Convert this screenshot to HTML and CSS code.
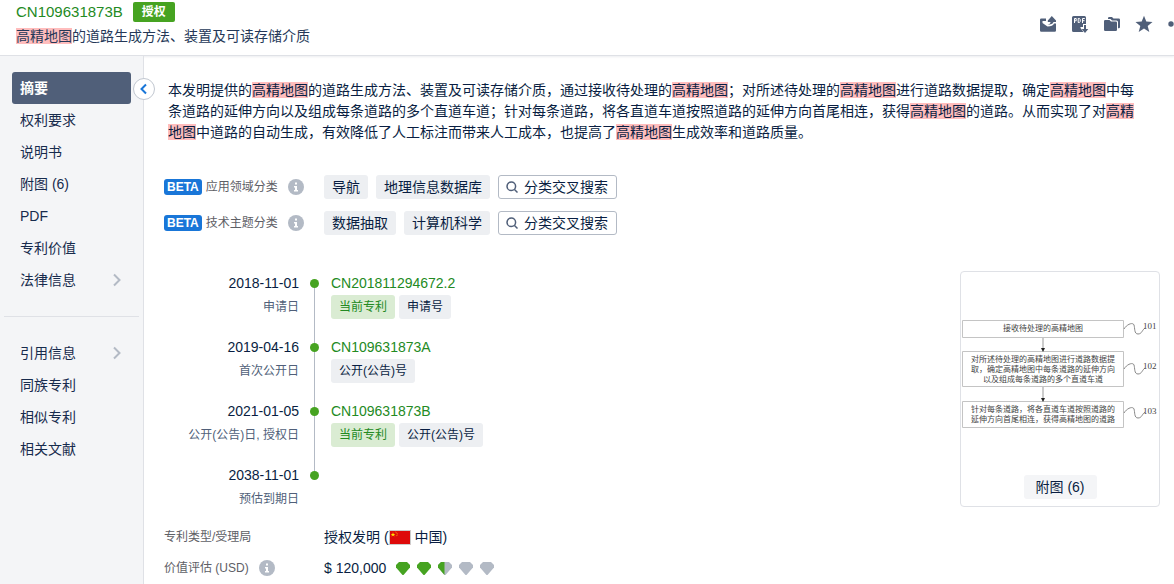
FILE: index.html
```html
<!DOCTYPE html>
<html lang="zh-CN">
<head>
<meta charset="utf-8">
<title>CN109631873B</title>
<meta name="viewport" content="width=device-width, initial-scale=1">
<link rel="stylesheet" href="styles.css">
</head>
<body>
<header class="header">
  <div class="heading">
    <div class="heading-top"><a class="patent-id" href="#">CN109631873B</a><span class="status">授权</span></div>
    <h1 class="title"><mark>高精地图</mark>的道路生成方法、装置及可读存储介质</h1>
  </div>
  <div class="actions">
    <button class="icon-btn" aria-label="分享"><svg width="18" height="18" viewBox="0 0 18 18"><path d="M2.200 3.500H7V6H3.500L3.500 8 8.500 11.500C12 11.500 14.500 10.500 15 8.500H17V15.500a1.300 1.300 0 0 1-1.300 1.300H2.200A1.300 1.300 0 0 1 1 15.500V4.800A1.300 1.300 0 0 1 2.200 3.500z"/><path d="M12.800 1L17 5.500V7H14.500C14 8.800 12 9.800 8.500 9.800 10.500 9.200 11.500 8.300 11.500 7H8.800V5.500z"/></svg></button>
    <button class="icon-btn" aria-label="下载PDF"><svg width="18" height="18" viewBox="0 0 18 18"><path d="M2.500 1h11A1.500 1.500 0 0 1 15 2.500V9h-3v3H9.500v1l3 4h-10A1.500 1.500 0 0 1 1 15.500v-13A1.500 1.500 0 0 1 2.500 1z"/><path d="M3.500 8V3.500h1.700v2.300H3.500M7.200 3.500v4h1.100l.9-.8V4.300l-.9-.8zM11.500 8V3.500h2.300M11.500 5.700h2" fill="none" stroke="#fff"/><path d="M13 10h2v4h2.300L14 18l-3.300-4H13z"/></svg></button>
    <button class="icon-btn" aria-label="文件夹"><svg width="18" height="18" viewBox="0 0 18 18"><path d="M5 4V3.200A1.200 1.200 0 0 1 6.200 2H9l1.500 1.500h5.300A1.200 1.200 0 0 1 17 4.700V12a1.200 1.200 0 0 1-1.200 1.200H15V7a1.500 1.500 0 0 0-1.500-1.500H9L7.500 4z"/><path d="M2.200 5h4.300L8 6.500h4.800A1.200 1.200 0 0 1 14 7.700v7.100a1.200 1.200 0 0 1-1.200 1.200H2.200A1.200 1.200 0 0 1 1 14.800V6.200A1.200 1.200 0 0 1 2.200 5z"/></svg></button>
    <button class="icon-btn" aria-label="收藏"><svg width="18" height="18" viewBox="0 0 18 18"><path d="M9 .8l2.300 5.700 6.200.4-4.800 4 1.600 6L9 13.600l-5.300 3.300 1.600-6-4.800-4 6.200-.4z"/></svg></button>
    <button class="icon-btn" aria-label="更多"><svg width="18" height="18" viewBox="0 0 18 18"><circle cx="4" cy="9" r="2.700"/><circle cx="11" cy="9" r="2.700"/></svg></button>
  </div>
</header>
<div class="layout">
  <aside class="sidebar">
    <nav class="nav">
      <a class="nav-item active" href="#">摘要</a>
      <a class="nav-item" href="#">权利要求</a>
      <a class="nav-item" href="#">说明书</a>
      <a class="nav-item" href="#">附图 (6)</a>
      <a class="nav-item" href="#">PDF</a>
      <a class="nav-item" href="#">专利价值</a>
      <a class="nav-item" href="#">法律信息<svg width="8" height="14" viewBox="0 0 8 14"><path d="M1 1.500L6.500 7 1 12.500"/></svg></a>
    </nav>
    <hr class="divider">
    <nav class="nav">
      <a class="nav-item" href="#">引用信息<svg width="8" height="14" viewBox="0 0 8 14"><path d="M1 1.500L6.500 7 1 12.500"/></svg></a>
      <a class="nav-item" href="#">同族专利</a>
      <a class="nav-item" href="#">相似专利</a>
      <a class="nav-item" href="#">相关文献</a>
    </nav>
    <button class="collapse" aria-label="收起"><svg width="8" height="12" viewBox="0 0 8 12"><path d="M6 1.500L1.500 6 6 10.500"/></svg></button>
  </aside>
  <main class="content">
    <p class="abstract">本发明提供的<mark>高精地图</mark>的道路生成方法、装置及可读存储介质，通过接收待处理的<mark>高精地图</mark>；对所述待处理的<mark>高精地图</mark>进行道路数据提取，确定<mark>高精地图</mark>中每<br>条道路的延伸方向以及组成每条道路的多个直道车道；针对每条道路，将各直道车道按照道路的延伸方向首尾相连，获得<mark>高精地图</mark>的道路。从而实现了对<mark>高精<br>地图</mark>中道路的自动生成，有效降低了人工标注而带来人工成本，也提高了<mark>高精地图</mark>生成效率和道路质量。</p>
    <div class="classes">
      <div class="row">
        <div class="label"><span class="beta">BETA</span>应用领域分类<svg class="info" width="16" height="16" viewBox="0 0 16 16"><circle cx="8" cy="8" r="8"/><path d="M7 3.500h2v2H7zM6 7h3v4h1v1.500H6V11h1V8.500H6z"/></svg></div>
        <span class="tag large">导航</span><span class="tag large">地理信息数据库</span>
        <button class="search"><svg width="12" height="12" viewBox="0 0 12 12"><circle cx="5.300" cy="5.300" r="4.300"/><path d="M8.500 8.500l3 3"/></svg>分类交叉搜索</button>
      </div>
      <div class="row">
        <div class="label"><span class="beta">BETA</span>技术主题分类<svg class="info" width="16" height="16" viewBox="0 0 16 16"><circle cx="8" cy="8" r="8"/><path d="M7 3.500h2v2H7zM6 7h3v4h1v1.500H6V11h1V8.500H6z"/></svg></div>
        <span class="tag large">数据抽取</span><span class="tag large">计算机科学</span>
        <button class="search"><svg width="12" height="12" viewBox="0 0 12 12"><circle cx="5.300" cy="5.300" r="4.300"/><path d="M8.500 8.500l3 3"/></svg>分类交叉搜索</button>
      </div>
    </div>
    <div class="overview">
      <ol class="timeline">
        <li class="event">
          <div class="when"><time>2018-11-01</time><span>申请日</span></div><i class="marker"></i>
          <div class="what"><a href="#">CN201811294672.2</a><div class="tags"><span class="tag current">当前专利</span><span class="tag">申请号</span></div></div>
        </li>
        <li class="event">
          <div class="when"><time>2019-04-16</time><span>首次公开日</span></div><i class="marker"></i>
          <div class="what"><a href="#">CN109631873A</a><div class="tags"><span class="tag">公开(公告)号</span></div></div>
        </li>
        <li class="event">
          <div class="when"><time>2021-01-05</time><span>公开(公告)日, 授权日</span></div><i class="marker"></i>
          <div class="what"><a href="#">CN109631873B</a><div class="tags"><span class="tag current">当前专利</span><span class="tag">公开(公告)号</span></div></div>
        </li>
        <li class="event">
          <div class="when"><time>2038-11-01</time><span>预估到期日</span></div><i class="marker"></i>
        </li>
      </ol>
      <figure class="figure">
        <svg class="drawing" viewBox="0 0 198 186" role="img" aria-label="流程图">
          <g fill="none" stroke="#c4c4c4"><path d="M1.500 48.500h161v17h-161zM1.500 79.500h161v35h-161zM1.500 129.500h161v26h-161z"/><path d="M82 66v10M82 115v11" stroke="#999"/></g>
          <path d="M80 76h4l-2 4zM80 126h4l-2 4z" fill="#222"/>
          <path fill="none" stroke="#888" d="M163 57c3-5 9-7 10-4s0 9 4 9 4-4 7-6M163 97c3-5 9-7 10-4s0 9 4 9 4-4 7-6M163 141c3-5 9-7 10-4s0 9 4 9 4-4 7-6"/>
          <g class="drawing-text" text-anchor="middle">
            <text x="82" y="59">接收待处理的高精地图</text>
            <text x="82" y="90">对所述待处理的高精地图进行道路数据提</text>
            <text x="82" y="100">取，确定高精地图中每条道路的延伸方向</text>
            <text x="82" y="110">以及组成每条道路的多个直道车道</text>
            <text x="82" y="140">针对每条道路，将各直道车道按照道路的</text>
            <text x="82" y="150">延伸方向首尾相连，获得高精地图的道路</text>
          </g>
          <g class="drawing-num"><text x="182" y="57">101</text><text x="182" y="97">102</text><text x="182" y="142">103</text></g>
        </svg>
        <figcaption><button class="figure-btn">附图 (6)</button></figcaption>
      </figure>
    </div>
    <div class="facts">
      <div class="fact"><div class="label">专利类型/受理局</div><div class="value">授权发明 (<svg class="flag" width="22" height="15" viewBox="0 0 22 15"><path fill="#de0a0a" stroke="#ccc" d="M.5.500h21v14H.5z"/><path fill="#ffde00" d="M4 2.200l.6 1.700h1.700L5 4.900l.5 1.700L4 5.600l-1.500 1L3 4.900 1.700 3.900h1.700z"/><path fill="none" stroke="#ffb000" stroke-dasharray="1 1" d="M6.500 2c2 .7 2.500 3 .5 4.500"/></svg>中国)</div></div>
      <div class="fact"><div class="label">价值评估 (USD)<svg class="info" width="16" height="16" viewBox="0 0 16 16"><circle cx="8" cy="8" r="8"/><path d="M7 3.500h2v2H7zM6 7h3v4h1v1.500H6V11h1V8.500H6z"/></svg></div>
        <div class="value">$ 120,000
          <span class="gems">
            <svg width="14" height="14" viewBox="0 0 14 14"><path fill="#46a321" d="M3 1h8l3 3v2.500L7.500 14h-1L0 6.500V4z"/></svg>
            <svg width="14" height="14" viewBox="0 0 14 14"><path fill="#46a321" d="M3 1h8l3 3v2.500L7.500 14h-1L0 6.500V4z"/></svg>
            <svg width="14" height="14" viewBox="0 0 14 14"><path fill="#b3bac5" d="M3 1h8l3 3v2.500L7.500 14h-1L0 6.500V4z"/><path fill="#46a321" d="M3 1h3.500v13L0 6.500V4z"/></svg>
            <svg width="14" height="14" viewBox="0 0 14 14"><path fill="#b3bac5" d="M3 1h8l3 3v2.500L7.500 14h-1L0 6.500V4z"/></svg>
            <svg width="14" height="14" viewBox="0 0 14 14"><path fill="#b3bac5" d="M3 1h8l3 3v2.500L7.500 14h-1L0 6.500V4z"/></svg>
          </span>
        </div>
      </div>
    </div>
  </main>
</div>
</body>
</html>
```
FILE: styles.css
```css
* { box-sizing: border-box; }
body {
  margin: 0;
  min-height: 100vh;
  display: flex;
  flex-direction: column;
  overflow-x: hidden;
  background: #fff;
  color: #091e42;
  font: 14px/20px "Liberation Sans", "Noto Sans CJK SC", sans-serif;
}
a { color: #238a23; text-decoration: none; }
button { padding: 0; border: 0; background: none; font: inherit; color: inherit; cursor: pointer; }
svg { display: block; flex: none; }
mark { background: #ffbdbd; color: inherit; }

.header {
  position: relative;
  display: flex;
  justify-content: space-between;
  padding: 1px 0 8px 16px;
  border-bottom: 1px solid #dfe1e6;
  box-shadow: 0 1px 2px rgba(9, 30, 66, 0.08);
}
.heading { padding-bottom: 1px; }
.heading-top { display: flex; align-items: center; gap: 10px; height: 22px; }
.patent-id { font-size: 15px; }
.status {
  padding: 0 9px;
  border-radius: 2px;
  background: #46a321;
  color: #fff;
  font-size: 12px;
  font-weight: bold;
}
.title { margin: 0; padding-top: 3px; font-size: 14px; font-weight: normal; line-height: 20px; color: #253858; }
.actions { display: flex; align-items: center; gap: 14px; margin-right: -11px; overflow: hidden; }
.icon-btn svg { fill: #505f79; }

.layout { flex: 1; display: flex; }
.sidebar {
  position: relative;
  flex: none;
  width: 144px;
  padding-top: 16px;
  background: #f4f5f7;
  border-right: 1px solid #dfe1e6;
}
.nav { padding: 0 12px; }
.nav-item {
  display: flex;
  align-items: center;
  justify-content: space-between;
  height: 32px;
  padding: 0 10px 0 8px;
  border-radius: 3px;
  color: #172b4d;
}
.nav-item svg { fill: none; stroke: #b3bac5; stroke-width: 2; }
.nav-item.active { background: #505f79; color: #fff; font-weight: bold; }
.divider { margin: 20px 4px; border: 0; border-top: 1px solid #dfe1e6; }
.collapse {
  position: absolute;
  top: 22px;
  right: -12px;
  display: flex;
  align-items: center;
  justify-content: center;
  width: 22px;
  height: 22px;
  border: 1px solid #c1c7d0;
  border-radius: 50%;
  background: #fff;
}
.collapse svg { fill: none; stroke: #1976d8; stroke-width: 2; }

.content { flex: 1; min-width: 0; padding: 24px 14px 0 20px; }
.abstract { margin: 0; padding: 0 4px; line-height: 21px; }
.classes { display: grid; gap: 12px; padding-top: 32px; }
.row { display: flex; gap: 8px; }
.label { display: flex; align-items: center; flex: none; width: 160px; font-size: 12px; color: #5e6066; }
.row .label { width: 152px; }
.beta {
  margin-right: 4px;
  padding: 0 3px;
  border-radius: 3px;
  background: #1976d8;
  color: #fff;
  font-weight: bold;
  line-height: 16px;
}
.info { margin-left: 10px; fill: #b3bac5; }
.info path { fill: #fff; }
.tag { padding: 0 8px; border-radius: 3px; background: #edeff2; font-size: 12px; line-height: 24px; white-space: nowrap; }
.tag.large { font-size: 14px; }
.tag.current { background: #daecd3; color: #238a23; }
.search {
  display: flex;
  align-items: center;
  gap: 6px;
  height: 24px;
  padding: 0 8px 0 7px;
  border: 1px solid #b3bac5;
  border-radius: 3px;
  background: #fff;
}
.search svg { fill: none; stroke: #505f79; stroke-width: 1.5; }

.overview { display: flex; justify-content: space-between; align-items: flex-start; padding-top: 36px; }
.timeline { margin: 0; padding: 0; list-style: none; }
.event { display: grid; grid-template-columns: 135px 32px auto; height: 64px; }
.event:last-child { height: 44px; }
.when { display: flex; flex-direction: column; text-align: right; line-height: 24px; }
.when span { font-size: 12px; color: #505f79; }
.marker { background: linear-gradient(#b3bac5, #b3bac5) 15px 12px / 1px 100% no-repeat; }
.marker::before {
  content: "";
  display: block;
  width: 9px;
  height: 9px;
  margin: 8px 0 0 11px;
  border-radius: 50%;
  background: #46a321;
}
.event:not(:last-child) .marker { height: 76px; }
.event:last-child .marker { background: none; }
.what a { display: block; line-height: 24px; }
.tags { display: flex; gap: 4px; }
.figure {
  flex: none;
  width: 200px;
  margin: 0;
  padding-bottom: 7px;
  border: 1px solid #dfe1e6;
  border-radius: 4px;
  text-align: center;
}
.drawing { width: 100%; }
.drawing-text { font-size: 8px; fill: #444; }
.drawing-num { font: 9px "Liberation Serif", serif; fill: #444; }
.figure-btn { margin-top: 17px; padding: 0 12px; border-radius: 3px; background: #f4f5f7; line-height: 24px; }

.facts { display: grid; gap: 7px; padding-top: 18px; }
.fact { display: flex; min-height: 24px; }
.value { display: flex; align-items: center; }
.flag { margin-right: 4px; }
.gems { display: flex; gap: 7px; margin-left: 10px; }
```
